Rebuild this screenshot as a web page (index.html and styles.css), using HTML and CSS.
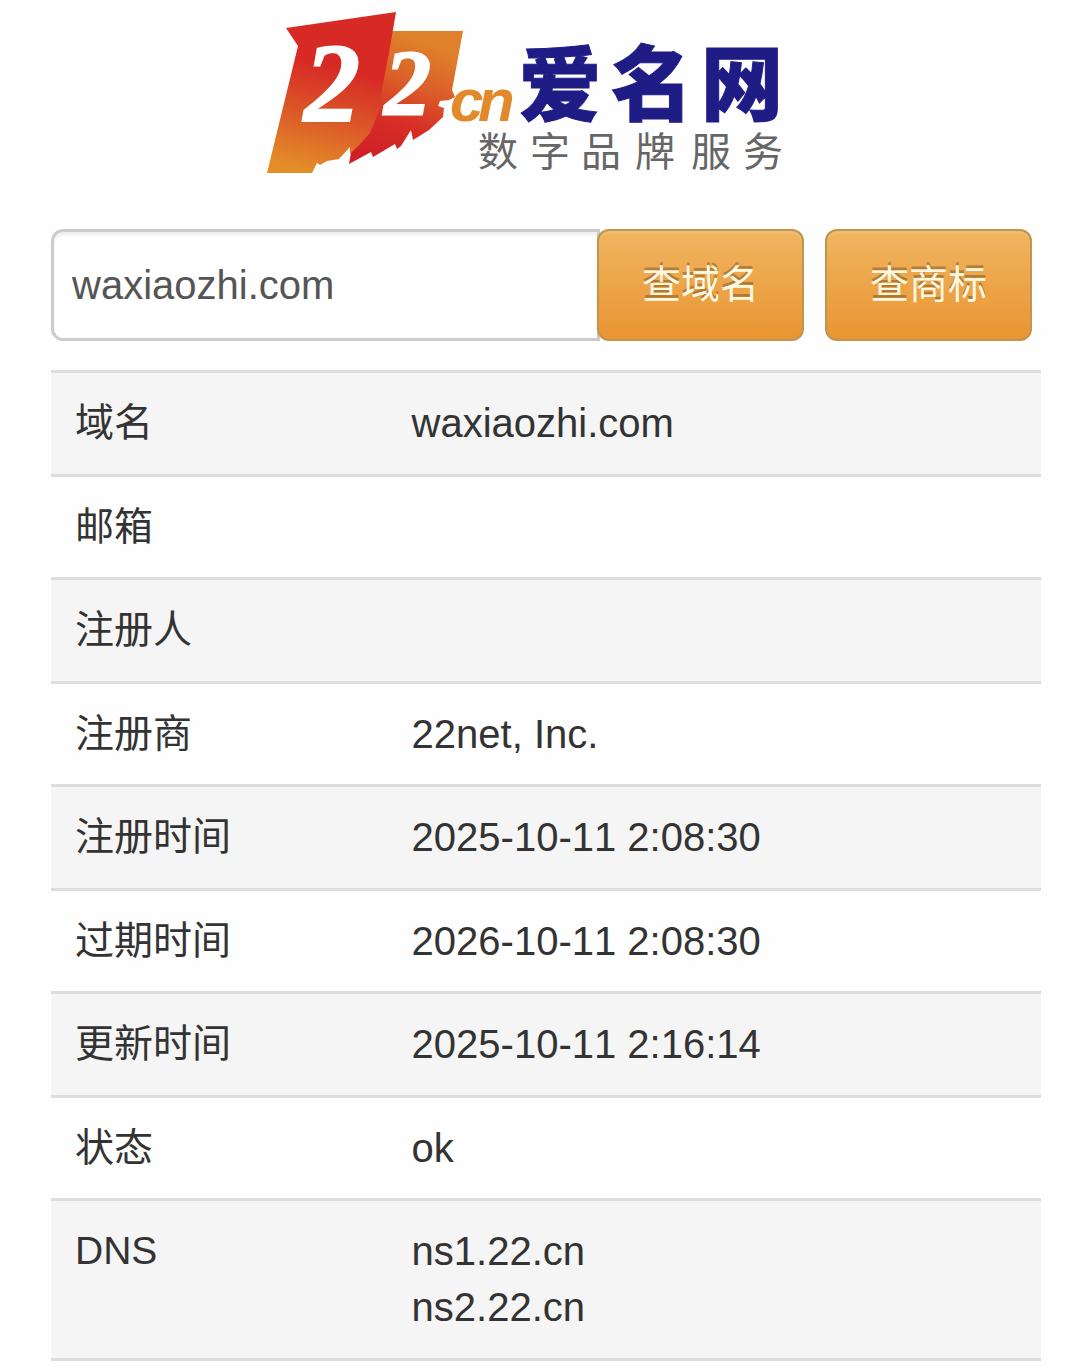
FILE: index.html
```
<!DOCTYPE html>
<html lang="zh-CN">
<head>
    <meta charset="UTF-8">
    <meta name="viewport" content="width=device-width, initial-scale=1.0">
    <title>waxiaozhi.com - 爱名网</title>
    <link rel="stylesheet" href="styles.css">
</head>
<body>
    <div class="container">
        <header class="header">
            <svg class="logo" viewBox="0 0 558 180" role="img" aria-label="22.cn 爱名网 数字品牌服务">
                <defs>
                    <linearGradient id="flag-left" x1="0.6" y1="0" x2="0.4" y2="1">
                        <stop offset="0.35" stop-color="#d72a25"/>
                        <stop offset="0.65" stop-color="#db5528"/>
                        <stop offset="1" stop-color="#e38d28"/>
                    </linearGradient>
                    <linearGradient id="flag-right" x1="0.7" y1="0" x2="0.4" y2="1">
                        <stop offset="0.1" stop-color="#df802a"/>
                        <stop offset="0.4" stop-color="#db5f29"/>
                        <stop offset="0.7" stop-color="#d62e26"/>
                        <stop offset="1" stop-color="#cf2028"/>
                    </linearGradient>
                </defs>
                <path fill="url(#flag-right)" d="M124 20H196L185 79L188 86L182 89L173 90L171 95L177 97L176 106L162 119L146 129L144 119L134 135L130 138L128 133L106 146L104 141L82 153L85 136L102 110Z"/>
                <path fill="url(#flag-left)" d="M19 17L129 1L122 42L115 78L112 100L103 122L96 130L83 143V136L72 148L60 150L53 154L50 152L45 162H0L31 35Z"/>
                <text class="logo-digit" x="37" y="110" font-size="112">2</text>
                <text class="logo-digit" x="117" y="103" font-size="94">2</text>
                <text class="logo-cn" x="183 211" y="110">cn</text>
                <text class="logo-name" x="252 344 434" y="103">爱名网</text>
                <text class="logo-slogan" x="211 263 314 368 424 476" y="155">数字品牌服务</text>
            </svg>
        </header>

        <form class="search">
            <input class="search-input" type="text" aria-label="域名" value="waxiaozhi.com">
            <button class="btn btn-domain" type="button">查域名</button>
            <button class="btn btn-brand" type="button">查商标</button>
        </form>

        <table class="whois">
            <tbody>
                <tr><th scope="row">域名</th><td>waxiaozhi.com</td></tr>
                <tr><th scope="row">邮箱</th><td></td></tr>
                <tr><th scope="row">注册人</th><td></td></tr>
                <tr><th scope="row">注册商</th><td>22net, Inc.</td></tr>
                <tr><th scope="row">注册时间</th><td>2025-10-11 2:08:30</td></tr>
                <tr><th scope="row">过期时间</th><td>2026-10-11 2:08:30</td></tr>
                <tr><th scope="row">更新时间</th><td>2025-10-11 2:16:14</td></tr>
                <tr><th scope="row">状态</th><td>ok</td></tr>
                <tr><th scope="row">DNS</th><td>ns1.22.cn<br>ns2.22.cn</td></tr>
            </tbody>
        </table>
    </div>
</body>
</html>
```

FILE: styles.css
```
* {
    margin: 0;
    padding: 0;
    box-sizing: border-box;
}

body {
    background: #fefefe;
    color: #333;
    font-family: "Liberation Sans", "Noto Sans CJK SC", sans-serif;
    font-size: 40px;
    font-kerning: none;
    line-height: 56px;
}

.container {
    padding: 11px 39px 6px 51px;
}

.header {
    text-align: center;
    margin-bottom: 38px;
}

.logo {
    display: block;
    width: 100%;
    max-width: 558px;
    margin: 0 auto;
}

.logo-digit {
    fill: #fff;
    stroke: #fff;
    stroke-width: 2px;
    font-family: "Liberation Serif", serif;
    font-style: italic;
    font-weight: bold;
}

.logo-cn {
    fill: #e28a2b;
    font-size: 60px;
    font-style: italic;
    font-weight: bold;
}

.logo-name {
    fill: #1f1c86;
    stroke: #1f1c86;
    stroke-width: 1px;
    font-family: "Noto Sans CJK SC", sans-serif;
    font-size: 82px;
    font-weight: 900;
}

.logo-slogan {
    fill: #666;
    font-family: "Noto Sans CJK SC", sans-serif;
    font-size: 40px;
}

.search {
    display: flex;
    margin-bottom: 29px;
    padding-right: 9px;
}

.search-input {
    flex: 1;
    min-width: 0;
    height: 112px;
    padding: 0 18px;
    border: 3px solid #ccc;
    border-radius: 12px 0 0 12px;
    background: #fff;
    box-shadow: inset 0 3px 3px rgba(0, 0, 0, 0.07);
    color: #555;
    font: inherit;
}

.btn {
    height: 112px;
    padding: 0 42px;
    border: 2px solid #c0954f;
    border-radius: 12px;
    background: linear-gradient(#f0b560, #e99532);
    box-shadow: inset 0 3px 0 rgba(255, 255, 255, 0.1);
    color: #fff8e0;
    font-family: inherit;
    font-size: 39px;
    line-height: 56px;
    text-shadow: 0 -3px 0 rgba(0, 0, 0, 0.25);
    cursor: pointer;
}

.btn:hover {
    background: #e99532;
}

.btn-domain {
    width: 207px;
    margin-left: -3px;
}

.btn-brand {
    width: 207px;
    margin-left: 21px;
}

.whois {
    width: 100%;
    border-collapse: collapse;
    border-bottom: 3px solid #ddd;
}

.whois th,
.whois td {
    padding: 22px 24px;
    border-top: 3px solid #ddd;
    text-align: left;
    vertical-align: top;
}

.whois th {
    width: 34%;
    font-size: 39px;
    font-weight: normal;
}

.whois tr:nth-child(odd) {
    background: #f5f5f5;
}

.whois tr:nth-child(odd) th,
.whois tr:nth-child(odd) td {
    padding-bottom: 23px;
}
```
